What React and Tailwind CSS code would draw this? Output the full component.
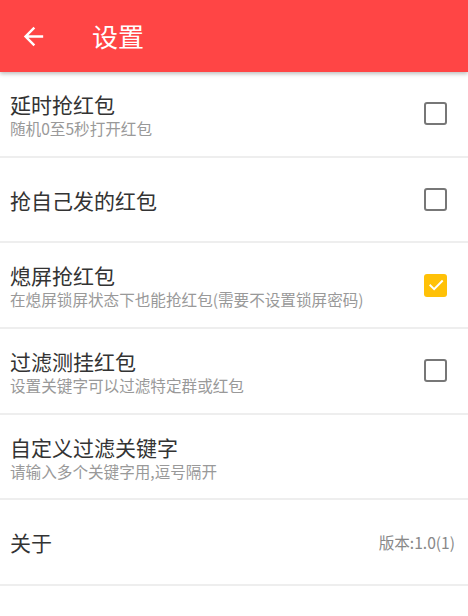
import React from 'react';

const items = [
    { title: '延时抢红包', sub: '随机0至5秒打开红包', type: 'check', checked: false },
    { title: '抢自己发的红包', type: 'check', checked: false },
    { title: '熄屏抢红包', sub: '在熄屏锁屏状态下也能抢红包(需要不设置锁屏密码)', type: 'check', checked: true },
    { title: '过滤测挂红包', sub: '设置关键字可以过滤特定群或红包', type: 'check', checked: false },
    { title: '自定义过滤关键字', sub: '请输入多个关键字用,逗号隔开' },
    { title: '关于', value: '版本:1.0(1)' },
];

function CheckBox({ checked }) {
    if (checked) {
        return (
            <div className="w-[23px] h-[23px] rounded-[3px] bg-[#ffc107] flex items-center justify-center">
                <svg width="18" height="18" viewBox="0 0 24 24" fill="none" stroke="#fff" strokeWidth="2.6" strokeLinecap="square">
                    <path d="M4.5 12.5l5 5L20 7" />
                </svg>
            </div>
        );
    }
    return <div className="w-[23px] h-[23px] rounded-[3px] border-[2.5px] border-[#777]" />;
}

export default function App() {
    return (
        <div className="w-[468px] h-[616px] bg-white overflow-hidden" style={{ fontFamily: '"Noto Sans CJK SC", "Noto Sans", sans-serif' }}>
            <header className="relative z-10 h-[72px] bg-[#ff4545] flex items-center shadow-[0_2px_4px_rgba(0,0,0,0.25)]">
                <svg className="ml-[19px]" width="29" height="29" viewBox="0 0 24 24" fill="#fff">
                    <path d="M20 11H7.83l5.59-5.59L12 4l-8 8 8 8 1.41-1.41L7.83 13H20v-2z" />
                </svg>
                <h1 className="ml-[44px] text-white text-[26px] leading-none">设置</h1>
            </header>
            <ul>
                {items.map((item) => (
                    <li key={item.title} className="h-[85.7px] border-b-2 border-[#eeeeee] flex items-center pl-[10px] pr-[21px]">
                        <div className="flex-1 flex flex-col">
                            <span className="text-[21px] leading-[28px] text-[#333]">{item.title}</span>
                            {item.sub && <span className="text-[15.6px] leading-[20px] text-[#999]">{item.sub}</span>}
                        </div>
                        {item.type === 'check' && <CheckBox checked={item.checked} />}
                        {item.value && <span className="text-[15.6px] text-[#888] mr-[-8px]">{item.value}</span>}
                    </li>
                ))}
            </ul>
        </div>
    );
}
